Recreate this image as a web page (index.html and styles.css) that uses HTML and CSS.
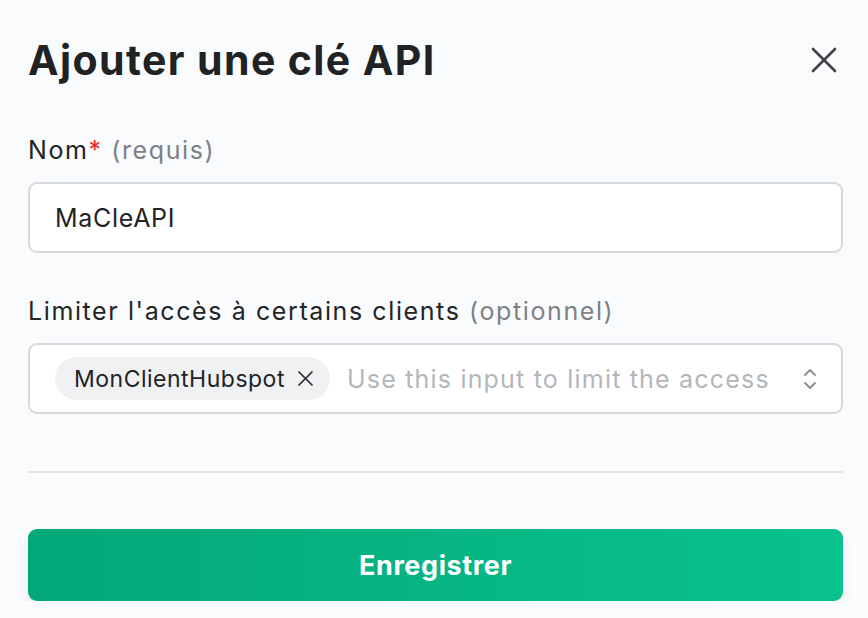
FILE: index.html
```html
<!DOCTYPE html>
<html lang="fr">
<head>
  <meta charset="UTF-8" />
  <meta name="viewport" content="width=device-width, initial-scale=1.0" />
  <title>Ajouter une clé API</title>
  <link rel="stylesheet" href="styles.css">
</head>
<body>
  <div class="dialog">
    <div class="dialog-header">
      <h1 class="dialog-title">Ajouter une clé API</h1>
      <button class="close-btn" aria-label="Fermer">
        <svg width="26" height="26" viewBox="0 0 26 26" fill="none" stroke="#3f4145" stroke-width="2.6" stroke-linecap="round">
          <path d="M2 2 L24 24 M24 2 L2 24" />
        </svg>
      </button>
    </div>

    <div class="field">
      <label class="field-label">Nom<span class="req">*</span> <span class="hint">(requis)</span></label>
      <div class="input">MaCleAPI</div>
    </div>

    <div class="field">
      <label class="field-label">Limiter l'accès à certains clients <span class="hint">(optionnel)</span></label>
      <div class="input select">
        <span class="chip">MonClientHubspot
          <svg width="17" height="17" viewBox="0 0 17 17" fill="none" stroke="#2a2c2f" stroke-width="1.7" stroke-linecap="round">
            <path d="M2 2 L15 15 M15 2 L2 15" />
          </svg>
        </span>
        <span class="placeholder">Use this input to limit the access</span>
        <svg class="chevrons" width="14" height="24" viewBox="0 0 14 24" fill="none" stroke="#8a8d91" stroke-width="1.8" stroke-linecap="round" stroke-linejoin="round">
          <path d="M2 8 L7 3 L12 8 M2 16 L7 21 L12 16" />
        </svg>
      </div>
    </div>

    <hr class="divider">

    <button class="save-btn">Enregistrer</button>
  </div>
</body>
</html>
```

FILE: styles.css
```css
body {
  margin: 0;
  background: #f9fbfd;
  font-family: 'Inter', 'Liberation Sans', sans-serif;
  color: #1f2123;
}

.dialog {
  width: 815px;
  padding: 30px 0 0 28px;
}

.dialog-header {
  display: flex;
  align-items: center;
  justify-content: space-between;
  height: 60px;
  margin-bottom: 44px;
}

.dialog-title {
  margin: 0;
  font-size: 41px;
  font-weight: 700;
  letter-spacing: 1.4px;
  color: #202224;
}

.close-btn {
  background: none;
  border: 0;
  padding: 0;
  margin-right: 6px;
  display: flex;
  cursor: pointer;
}

.field {
  margin-bottom: 42px;
}

.field:last-of-type {
  margin-bottom: 30px;
}

.field-label {
  display: block;
  font-size: 25px;
  line-height: 32px;
  letter-spacing: 1.6px;
  color: #222426;
  margin-bottom: 16px;
}

.req {
  color: #ee2b2b;
}

.hint {
  color: #7d8186;
}

.input {
  box-sizing: border-box;
  height: 71px;
  border: 2px solid #d5d9dd;
  border-radius: 9px;
  background: #fff;
  display: flex;
  align-items: center;
  padding: 0 25px;
  font-size: 25px;
  letter-spacing: 0.7px;
  color: #222426;
}

.select {
  padding: 0 24px 0 25px;
}

.chip {
  display: inline-flex;
  align-items: center;
  gap: 12px;
  height: 43px;
  padding: 0 16px 0 19px;
  border-radius: 22px;
  background: #f0f1f3;
  font-size: 23px;
  letter-spacing: 0.5px;
  color: #222426;
}

.placeholder {
  flex: 1;
  margin-left: 17px;
  font-size: 25px;
  letter-spacing: 1.2px;
  color: #b3b6ba;
  white-space: nowrap;
}

.divider {
  border: 0;
  height: 2px;
  background: #e3e5e8;
  margin: 57px 0 56px;
}

.save-btn {
  width: 100%;
  height: 72px;
  border: 0;
  border-radius: 9px;
  background: linear-gradient(90deg, #03a878, #09c28d);
  box-shadow: 0 6px 12px rgba(0, 0, 0, 0.08);
  color: #fff;
  font-family: inherit;
  font-size: 27px;
  font-weight: 700;
  letter-spacing: 0.6px;
}
```
